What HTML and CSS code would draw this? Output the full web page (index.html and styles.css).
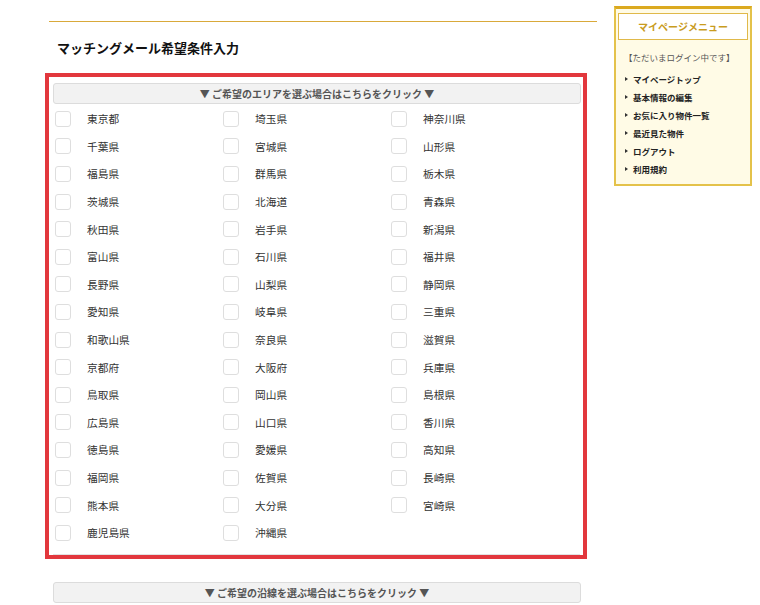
FILE: index.html
```html
<!DOCTYPE html>
<html lang="ja">
<head>
<meta charset="utf-8">
<title>マッチングメール希望条件入力</title>
<link rel="stylesheet" href="styles.css">
</head>
<body>
<div class="page">
  <div class="main">
    <div class="rule"></div>
    <h2 class="title">マッチングメール希望条件入力</h2>
    <div class="area-box">
      <div class="toggle">▼ ご希望のエリアを選ぶ場合はこちらをクリック ▼</div>
      <div class="pref-grid">
        <label class="pref"><span class="cb"></span><span>東京都</span></label>
        <label class="pref"><span class="cb"></span><span>埼玉県</span></label>
        <label class="pref"><span class="cb"></span><span>神奈川県</span></label>
        <label class="pref"><span class="cb"></span><span>千葉県</span></label>
        <label class="pref"><span class="cb"></span><span>宮城県</span></label>
        <label class="pref"><span class="cb"></span><span>山形県</span></label>
        <label class="pref"><span class="cb"></span><span>福島県</span></label>
        <label class="pref"><span class="cb"></span><span>群馬県</span></label>
        <label class="pref"><span class="cb"></span><span>栃木県</span></label>
        <label class="pref"><span class="cb"></span><span>茨城県</span></label>
        <label class="pref"><span class="cb"></span><span>北海道</span></label>
        <label class="pref"><span class="cb"></span><span>青森県</span></label>
        <label class="pref"><span class="cb"></span><span>秋田県</span></label>
        <label class="pref"><span class="cb"></span><span>岩手県</span></label>
        <label class="pref"><span class="cb"></span><span>新潟県</span></label>
        <label class="pref"><span class="cb"></span><span>富山県</span></label>
        <label class="pref"><span class="cb"></span><span>石川県</span></label>
        <label class="pref"><span class="cb"></span><span>福井県</span></label>
        <label class="pref"><span class="cb"></span><span>長野県</span></label>
        <label class="pref"><span class="cb"></span><span>山梨県</span></label>
        <label class="pref"><span class="cb"></span><span>静岡県</span></label>
        <label class="pref"><span class="cb"></span><span>愛知県</span></label>
        <label class="pref"><span class="cb"></span><span>岐阜県</span></label>
        <label class="pref"><span class="cb"></span><span>三重県</span></label>
        <label class="pref"><span class="cb"></span><span>和歌山県</span></label>
        <label class="pref"><span class="cb"></span><span>奈良県</span></label>
        <label class="pref"><span class="cb"></span><span>滋賀県</span></label>
        <label class="pref"><span class="cb"></span><span>京都府</span></label>
        <label class="pref"><span class="cb"></span><span>大阪府</span></label>
        <label class="pref"><span class="cb"></span><span>兵庫県</span></label>
        <label class="pref"><span class="cb"></span><span>鳥取県</span></label>
        <label class="pref"><span class="cb"></span><span>岡山県</span></label>
        <label class="pref"><span class="cb"></span><span>島根県</span></label>
        <label class="pref"><span class="cb"></span><span>広島県</span></label>
        <label class="pref"><span class="cb"></span><span>山口県</span></label>
        <label class="pref"><span class="cb"></span><span>香川県</span></label>
        <label class="pref"><span class="cb"></span><span>徳島県</span></label>
        <label class="pref"><span class="cb"></span><span>愛媛県</span></label>
        <label class="pref"><span class="cb"></span><span>高知県</span></label>
        <label class="pref"><span class="cb"></span><span>福岡県</span></label>
        <label class="pref"><span class="cb"></span><span>佐賀県</span></label>
        <label class="pref"><span class="cb"></span><span>長崎県</span></label>
        <label class="pref"><span class="cb"></span><span>熊本県</span></label>
        <label class="pref"><span class="cb"></span><span>大分県</span></label>
        <label class="pref"><span class="cb"></span><span>宮崎県</span></label>
        <label class="pref"><span class="cb"></span><span>鹿児島県</span></label>
        <label class="pref"><span class="cb"></span><span>沖縄県</span></label>
      </div>
      <div class="box-foot"></div>
    </div>
    <div class="toggle toggle-line">▼ ご希望の沿線を選ぶ場合はこちらをクリック ▼</div>
  </div>
  <aside class="side">
    <div class="side-head">マイページメニュー</div>
    <p class="login">【ただいまログイン中です】</p>
    <ul class="menu">
      <li>マイページトップ</li>
      <li>基本情報の編集</li>
      <li>お気に入り物件一覧</li>
      <li>最近見た物件</li>
      <li>ログアウト</li>
      <li>利用規約</li>
    </ul>
  </aside>
</div>
</body>
</html>
```

FILE: styles.css
```css
* { box-sizing: border-box; }
html, body { margin: 0; padding: 0; background: #fff; }
body {
  font-family: "Noto Sans CJK JP", "Noto Sans", sans-serif;
  color: #333;
  width: 760px;
  height: 605px;
  overflow: hidden;
}
.page {
  display: flex;
  align-items: flex-start;
}
.main {
  width: 548px;
  margin-left: 49px;
  padding-top: 21px;
}
.rule {
  border-top: 1px solid #d9a93a;
}
.title {
  margin: 0;
  padding: 17px 0 0 8px;
  height: 51px;
  font-size: 13px;
  font-weight: bold;
  color: #111;
  line-height: 18px;
}
.area-box {
  margin-left: -4px;
  width: 542px;
  border: 4px solid #e2373d;
  padding: 6px 2px 0 4px;
}
.toggle {
  height: 21px;
  width: 528px;
  background: #f2f2f2;
  border: 1px solid #dcdcdc;
  border-radius: 3px;
  font-size: 10px;
  font-weight: bold;
  color: #555;
  text-align: center;
  line-height: 19px;
}
.pref-grid {
  display: grid;
  grid-template-columns: 168px 168px 168px;
  grid-auto-rows: 27.6px;
  padding: 1px 0 0 2px;
}
.pref {
  display: flex;
  align-items: center;
  font-size: 10.7px;
  color: #333;
}
.cb {
  width: 16px;
  height: 16px;
  border: 1px solid #dedede;
  border-radius: 3px;
  background: #fff;
  margin-right: 16px;
  flex: none;
}
.box-foot {
  margin-top: 7px;
  width: 527px;
  border-top: 1px solid #e2e2e2;
}
.toggle-line {
  margin-top: 23px;
  margin-left: 4px;
  height: 21px;
}
.side {
  margin-left: 17px;
  margin-top: 6px;
  width: 138px;
  height: 180px;
  background: #fffbe6;
  border: 2px solid #e4c24a;
  border-top: 3px solid #dba91f;
  padding: 4px 2px 0 2px;
}
.side-head {
  height: 27px;
  background: #fff;
  border: 1px solid #e0b94a;
  color: #c99c1e;
  font-size: 10px;
  font-weight: bold;
  text-align: center;
  line-height: 25px;
}
.login {
  margin: 11px 0 0 6px;
  font-size: 8.5px;
  color: #555;
  line-height: 12px;
}
.menu {
  list-style: none;
  margin: 10px 0 0 0;
  padding: 0 0 0 7px;
}
.menu li {
  position: relative;
  padding-left: 8px;
  font-size: 8.5px;
  font-weight: bold;
  color: #222;
  height: 18px;
  line-height: 12px;
}
.menu li::before {
  content: "";
  position: absolute;
  left: 0;
  top: 4px;
  border-left: 3px solid #333;
  border-top: 2px solid transparent;
  border-bottom: 2px solid transparent;
}
```
